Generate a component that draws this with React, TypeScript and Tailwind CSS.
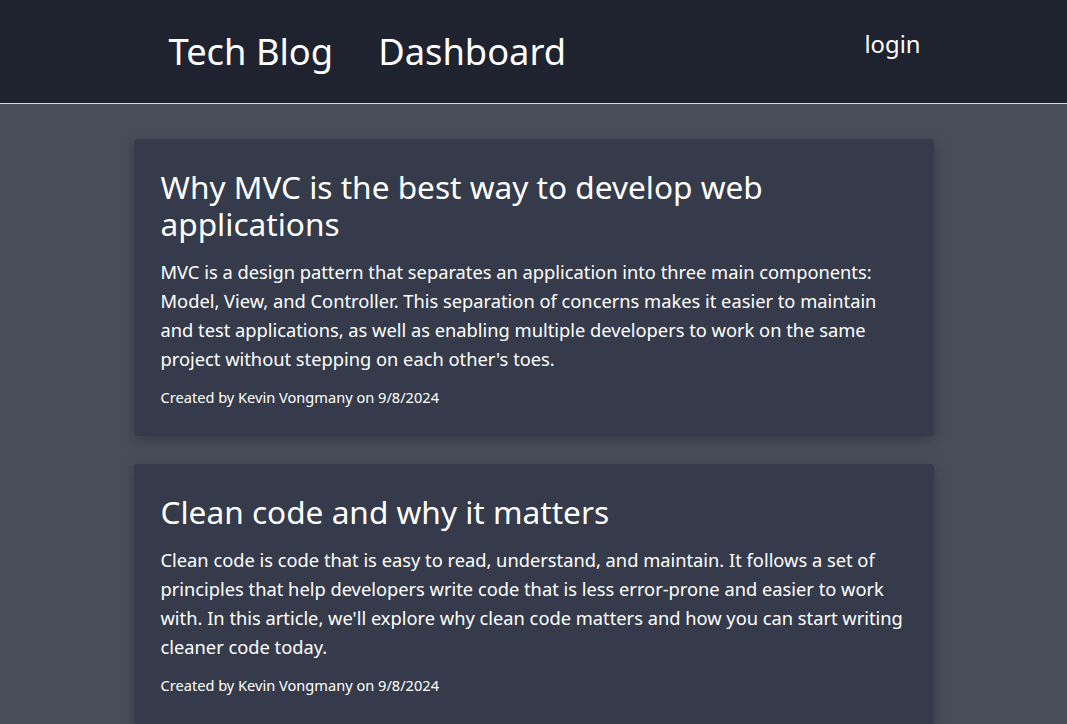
const posts = [
  {
    title: "Why MVC is the best way to develop web applications",
    body: "MVC is a design pattern that separates an application into three main components: Model, View, and Controller. This separation of concerns makes it easier to maintain and test applications, as well as enabling multiple developers to work on the same project without stepping on each other's toes.",
    author: "Kevin Vongmany",
    date: "9/8/2024",
  },
  {
    title: "Clean code and why it matters",
    body: "Clean code is code that is easy to read, understand, and maintain. It follows a set of principles that help developers write code that is less error-prone and easier to work with. In this article, we'll explore why clean code matters and how you can start writing cleaner code today.",
    author: "Kevin Vongmany",
    date: "9/8/2024",
  },
]

export default function App() {
  return (
    <div
      className="h-[724px] overflow-hidden bg-[#474e5a] text-white"
      style={{ fontFamily: '"Noto Sans", "Open Sans", sans-serif' }}
    >
      {/* header */}
      <header className="h-[104px] bg-[#1f2330] border-b border-[#d8dbe0]">
        <nav className="w-[800px] mx-auto flex items-start justify-between pt-[26px] pl-[35px] pr-[13px]">
          <div className="flex gap-[45px] mt-[3px]">
            <a className="text-[36.3px] leading-[44px]">Tech Blog</a>
            <a className="text-[36.3px] leading-[44px]">Dashboard</a>
          </div>
          <a className="text-[23.8px] leading-[36px]">login</a>
        </nav>
      </header>

      {/* posts */}
      <main className="w-[800px] mx-auto pt-[35px] flex flex-col gap-[28px]">
        {posts.map((post) => (
          <article
            key={post.title}
            className="bg-[#353b4a] rounded-sm shadow-[0_4px_14px_rgba(0,0,0,0.25)] pl-[27px] pr-[22px] pt-[29px] pb-[29px]"
          >
            <h2 className="text-[31.6px] leading-[37px]">{post.title}</h2>
            <p className="mt-[15px] text-[18.3px] leading-[29px]">{post.body}</p>
            <p className="mt-[14px] text-[14.6px] leading-[20px]">
              Created by {post.author} on {post.date}
            </p>
          </article>
        ))}
      </main>
    </div>
  )
}
